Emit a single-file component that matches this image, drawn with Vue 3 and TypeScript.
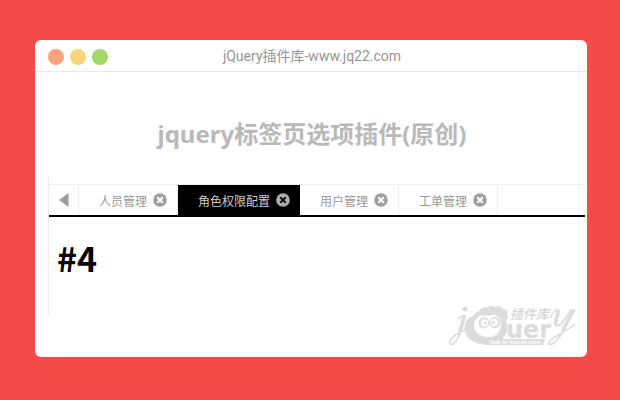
<script setup lang="ts">
import { ref } from 'vue'

interface Tab {
  id: number
  label: string
}

const tabs = ref<Tab[]>([
  { id: 3, label: '人员管理' },
  { id: 4, label: '角色权限配置' },
  { id: 5, label: '用户管理' },
  { id: 6, label: '工单管理' },
])
const activeId = ref<number>(4)

function closeTab(id: number): void {
  tabs.value = tabs.value.filter((tab) => tab.id !== id)
  if (activeId.value === id && tabs.value.length > 0) {
    activeId.value = tabs.value[0].id
  }
}

function previousTab(): void {
  const index = tabs.value.findIndex((tab) => tab.id === activeId.value)
  if (index > 0) activeId.value = tabs.value[index - 1].id
}
</script>

<template>
  <main class="window">
    <header class="titlebar">
      <div class="dots">
        <span class="dot dot-close"></span>
        <span class="dot dot-min"></span>
        <span class="dot dot-max"></span>
      </div>
      <span class="address">jQuery插件库-www.jq22.com</span>
    </header>

    <h1 class="heading">jquery标签页选项插件(原创)</h1>

    <section class="panel">
      <nav class="tabbar">
        <button class="scroll" type="button" aria-label="上一个" @click="previousTab">
          <svg width="10" height="14" viewBox="0 0 10 14"><path d="M9.5 0V14L0 7Z" fill="#9d9d9d" /></svg>
        </button>
        <div v-for="tab in tabs" :key="tab.id" class="tab" :class="{ active: tab.id === activeId }">
          <button class="tab-label" type="button" @click="activeId = tab.id">{{ tab.label }}</button>
          <button class="tab-close" type="button" aria-label="关闭" @click="closeTab(tab.id)">
            <svg width="14" height="14" viewBox="0 0 14 14">
              <circle cx="7" cy="7" r="6.8" fill="currentColor" />
              <path class="cross" d="M4.3 4.3L9.7 9.7M9.7 4.3L4.3 9.7" />
            </svg>
          </button>
        </div>
      </nav>
      <h2 class="content">#{{ activeId }}</h2>
    </section>

    <footer class="brand">
      <svg width="130" height="44" viewBox="0 0 130 44" role="img" aria-label="jQuery 插件库">
        <g fill="none" stroke="#dcdcdc" stroke-linecap="round">
          <path d="M10 15C13 12 17 11 17 12C16 18 13 28 10 34C7 40 3 42 2 39C1 34 9 30 17 26" stroke-width="1.6" />
          <path d="M16 13L11 30" stroke-width="3.4" />
          <path d="M103 13C105 7 110 4 111 7C112 11 106 20 109 21.5C113 23 119 12 123 6" stroke-width="1.6" />
          <path d="M110 7C110 11 107 17 107.500 20" stroke-width="3.4" />
          <path d="M127 6C121 14 116 28 110 35C105 41 100 42 101 38C103 34 116 29 127 20" stroke-width="1.6" />
          <path d="M125 7L115 26" stroke-width="3.4" />
        </g>
        <circle cx="17" cy="5" r="2.5" fill="#dcdcdc" />
        <path
          d="M25 12C27 8 31 8 32 6C35 2 39 4 40 3C43 1 46 2 47 3C51 1 54 3 55 5C59 5 60 8 59 10C61 13 59 15 58 17C61 24 59 30 55 34L58 41H40C29 41 19 36 17 28C15 20 19 14 25 12Z"
          fill="#dcdcdc"
        />
        <path
          d="M29 14C33 9 36 13 39 11C43 13 45 9 48 12C53 13 53 17 53 21C53 29 46 34 40 33C32 33 26 28 26 22C26 18 27 16 29 14Z"
          fill="#fff"
        />
        <circle cx="36" cy="19" r="5.5" fill="#dcdcdc" />
        <circle cx="47" cy="18.5" r="5.5" fill="#dcdcdc" />
        <circle cx="36.5" cy="19" r="3.7" fill="#fff" />
        <circle cx="46.5" cy="18.5" r="3.7" fill="#fff" />
        <circle cx="37.5" cy="19" r="1.6" fill="#dcdcdc" />
        <circle cx="45.500" cy="18.500" r="1.6" fill="#dcdcdc" />
        <path d="M40 35H97L95 41H39Z" fill="#dcdcdc" />
        <text class="brand-cn" x="62" y="15">插件库</text>
        <text class="brand-main" x="58" y="34">uer</text>
        <text class="brand-motto" x="42" y="40">look for less,do more</text>
      </svg>
    </footer>
  </main>
</template>

<style>
body {
  background: #f24b48;
}
</style>

<style scoped>
.window {
  display: flex;
  flex-direction: column;
  margin: 40px 33px 43px 35px;
  background: #fff;
  border-radius: 6px;
  font-family: "Liberation Sans", "Noto Sans CJK SC", sans-serif;
}
.titlebar {
  display: grid;
  grid-template-columns: 1fr auto 1fr;
  align-items: center;
  height: 31px;
  border-bottom: 1px solid #e9e9e9;
}
.dots {
  display: flex;
  gap: 6px;
  padding: 2px 0 0 13px;
}
.dot {
  width: 16px;
  height: 16px;
  border-radius: 50%;
}
.dot-close {
  background: #f7a37b;
}
.dot-min {
  background: #f8d57b;
}
.dot-max {
  background: #a3d869;
}
.address {
  padding-left: 2px;
  color: #969696;
  font-family: Roboto, "Noto Sans CJK SC", sans-serif;
  font-size: 14px;
  line-height: 20px;
}
.heading {
  margin: 44px 0 0;
  padding-left: 2px;
  color: #b9b9b9;
  font-family: "Noto Sans", "Noto Sans CJK SC", sans-serif;
  font-size: 24px;
  font-weight: 700;
  line-height: 36px;
  text-align: center;
}
.panel {
  margin: 25px 2px 0 13px;
  padding: 7px 0 35px;
  border-left: 1px solid #efefef;
}
.tabbar {
  display: flex;
  height: 30px;
  border-top: 1px solid #efefef;
  border-bottom: 2px solid #000;
}
button {
  margin: 0;
  padding: 0;
  border: 0;
  background: none;
  color: inherit;
  font: inherit;
  cursor: pointer;
}
.scroll {
  display: flex;
  align-items: center;
  justify-content: center;
  width: 30px;
  border-right: 1px solid #efefef;
}
.tab {
  display: flex;
  align-items: center;
  gap: 6px;
  padding: 0 10px 0 20px;
  border-right: 1px solid #efefef;
  color: #999;
  font-family: "Noto Sans CJK SC", sans-serif;
  font-size: 12px;
}
.tab.active {
  border-right: 0;
  background: #000;
  color: #ccc;
}
.tab-close {
  display: flex;
  color: #a0a0a0;
}
.cross {
  fill: none;
  stroke: #fff;
  stroke-width: 2;
}
.active .tab-close {
  color: #b0acac;
}
.active .cross {
  stroke: #111;
}
.content {
  margin: 19px 0 0 8px;
  color: #000;
  font-family: "Noto Sans CJK SC", sans-serif;
  font-size: 34px;
  font-weight: 700;
  line-height: 44px;
}
.brand {
  display: flex;
  justify-content: flex-end;
  margin-top: -11px;
  padding: 0 9px 9px 0;
}
.brand-cn {
  fill: #d5d5d5;
  font-family: "Noto Sans CJK SC", sans-serif;
  font-size: 13px;
  font-style: italic;
  font-weight: 500;
}
.brand-main {
  fill: #dcdcdc;
  font-family: "DejaVu Sans", sans-serif;
  font-size: 24px;
  font-weight: 700;
}
.brand-motto {
  fill: #fff;
  font-family: "Liberation Sans", sans-serif;
  font-size: 5px;
  font-style: italic;
  font-weight: 700;
}
</style>
